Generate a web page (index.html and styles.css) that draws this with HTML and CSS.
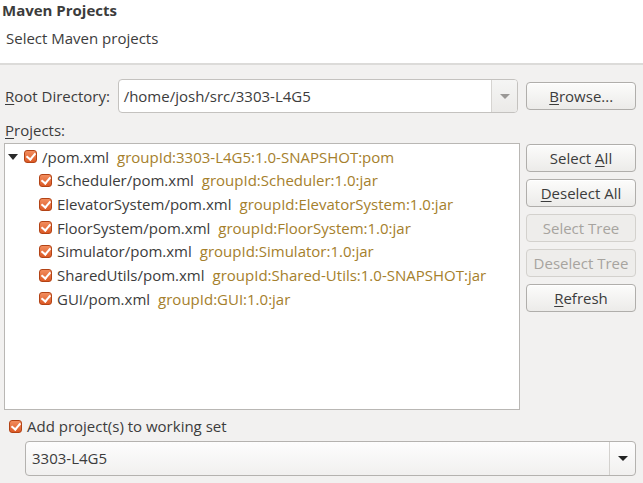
FILE: index.html
```html
<!DOCTYPE html>
<html>
<head>
<meta charset="utf-8">
<link rel="stylesheet" href="styles.css">
</head>
<body>
<div class="header">
  <div class="title">Maven Projects</div>
  <div class="subtitle">Select Maven projects</div>
</div>
<div class="main">
  <div class="root-row">
    <label class="lbl"><u>R</u>oot Directory:</label>
    <div class="combo-edit">
      <div class="entry">/home/josh/src/3303-L4G5</div>
      <div class="drop"><span class="arrow grey"></span></div>
    </div>
    <button class="btn browse"><u>B</u>rowse...</button>
  </div>
  <div class="lbl projects-lbl"><u>P</u>rojects:</div>
  <div class="tree-area">
    <div class="tree">
      <div class="row"><span class="expander"></span><span class="cb"></span><span class="name">/pom.xml</span><span class="gid">groupId:3303-L4G5:1.0-SNAPSHOT:pom</span></div>
      <div class="row child"><span class="cb"></span><span class="name">Scheduler/pom.xml</span><span class="gid">groupId:Scheduler:1.0:jar</span></div>
      <div class="row child"><span class="cb"></span><span class="name">ElevatorSystem/pom.xml</span><span class="gid">groupId:ElevatorSystem:1.0:jar</span></div>
      <div class="row child"><span class="cb"></span><span class="name">FloorSystem/pom.xml</span><span class="gid">groupId:FloorSystem:1.0:jar</span></div>
      <div class="row child"><span class="cb"></span><span class="name">Simulator/pom.xml</span><span class="gid">groupId:Simulator:1.0:jar</span></div>
      <div class="row child"><span class="cb"></span><span class="name">SharedUtils/pom.xml</span><span class="gid">groupId:Shared-Utils:1.0-SNAPSHOT:jar</span></div>
      <div class="row child"><span class="cb"></span><span class="name">GUI/pom.xml</span><span class="gid">groupId:GUI:1.0:jar</span></div>
    </div>
    <div class="side">
      <button class="btn">Select <u>A</u>ll</button>
      <button class="btn"><u>D</u>eselect All</button>
      <button class="btn disabled">Select Tree</button>
      <button class="btn disabled">Deselect Tree</button>
      <button class="btn"><u>R</u>efresh</button>
    </div>
  </div>
  <div class="ws-row"><span class="cb"></span><span class="ws-text">Add project(s) to working set</span></div>
  <div class="combo-ro">
    <div class="value">3303-L4G5</div>
    <div class="drop"><span class="arrow"></span></div>
  </div>
</div>
</body>
</html>
```

FILE: styles.css
```css
* { box-sizing: border-box; }
html, body { margin: 0; padding: 0; }
body {
  width: 643px;
  height: 483px;
  overflow: hidden;
  background: #f2f1f0;
  font-family: "Open Sans", "Noto Sans", sans-serif;
  font-size: 15px;
  color: #3c3c3c;
}
u { text-decoration: underline; text-underline-offset: 2px; }

.header {
  background: #ffffff;
  height: 65px;
  border-bottom: 2px solid #dcdbd9;
  padding: 0 0 0 2px;
}
.title {
  font-weight: bold;
  font-size: 15px;
  line-height: 20px;
}
.subtitle {
  padding-left: 4px;
  margin-top: 8px;
  line-height: 20px;
}

.main {
  padding: 14px 7px 0 4px;
}

.root-row {
  display: flex;
  align-items: center;
  height: 34px;
}
.lbl { padding-left: 1px; line-height: 20px; }
.root-row .lbl { width: 114px; }
.combo-edit {
  display: flex;
  width: 402px;
  height: 34px;
  border: 1px solid #c4c2bf;
  border-radius: 4px;
  background: #fff;
  overflow: hidden;
}
.combo-edit .entry {
  flex: 1;
  padding-left: 5px;
  line-height: 32px;
  color: #3c3c3c;
}
.combo-edit .drop {
  width: 26px;
  border-left: 1px solid #d6d4d1;
  background: linear-gradient(#f5f5f4, #ebeae8);
  display: flex;
  align-items: center;
  justify-content: center;
}
.arrow {
  width: 0; height: 0;
  border-left: 5px solid transparent;
  border-right: 5px solid transparent;
  border-top: 5px solid #222;
}
.arrow.grey { border-top-color: #9a9896; }

.btn {
  font: inherit;
  color: #3c3c3c;
  width: 110px;
  height: 28px;
  padding: 0;
  border: 1px solid #b0aeab;
  border-radius: 4px;
  background: linear-gradient(#fcfcfb, #ecebe9);
  box-shadow: inset 0 1px 0 #fff;
}
.browse { margin-left: 8px; }
.btn.disabled {
  color: #a7a49f;
  border-color: #d3d1cd;
  background: #eeedeb;
  box-shadow: none;
}

.projects-lbl {
  margin-top: 6px;
  line-height: 22px;
}
.tree-area {
  display: flex;
  margin-top: 2px;
}
.tree {
  width: 517px;
  height: 267px;
  background: #fff;
  border: 1px solid #b9b7b4;
  padding-top: 1px;
}
.row {
  display: flex;
  align-items: center;
  height: 23.67px;
  white-space: nowrap;
}
.expander {
  width: 0; height: 0;
  margin-left: 3px;
  margin-right: 6px;
  border-left: 5px solid transparent;
  border-right: 5px solid transparent;
  border-top: 6px solid #2a2a2a;
}
.row .cb { margin-right: 5px; }
.row.child { padding-left: 34px; }
.name { margin-right: 8px; }
.gid { color: #a5802c; }

.cb {
  display: inline-block;
  position: relative;
  width: 13px;
  height: 13px;
  border-radius: 3px;
  border: 1px solid #b34315;
  background: linear-gradient(#f28d5e, #dc5a26);
  flex: none;
}
.cb::after {
  content: "";
  position: absolute;
  left: 3px;
  top: 0px;
  width: 4px;
  height: 7px;
  border-right: 2px solid #fff;
  border-bottom: 2px solid #fff;
  transform: rotate(40deg);
}

.side {
  display: flex;
  flex-direction: column;
  gap: 7px;
  margin-left: 6px;
  padding-top: 1px;
}

.ws-row {
  display: flex;
  align-items: center;
  height: 22px;
  margin-top: 5px;
  padding-left: 5px;
}
.ws-row .cb { margin-right: 5px; }

.combo-ro {
  display: flex;
  margin-top: 4px;
  margin-left: 21px;
  width: 611px;
  height: 35px;
  border: 1px solid #b4b2af;
  border-radius: 4px;
  background: linear-gradient(#fdfdfd, #f1f0ef);
  overflow: hidden;
}
.combo-ro .value {
  flex: 1;
  padding-left: 6px;
  line-height: 33px;
}
.combo-ro .drop {
  width: 26px;
  border-left: 1px solid #d3d1ce;
  display: flex;
  align-items: center;
  justify-content: center;
}
```
